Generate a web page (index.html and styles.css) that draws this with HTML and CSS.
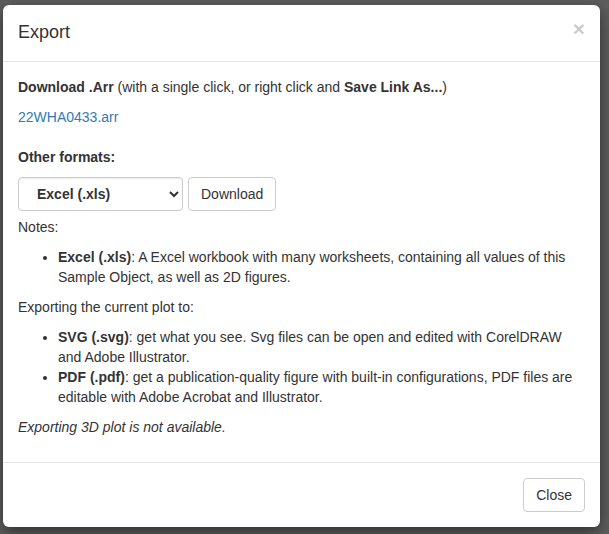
FILE: index.html
```html
<!DOCTYPE html>
<html lang="en">
<head>
<meta charset="utf-8">
<title>Export</title>
<link rel="stylesheet" href="styles.css">
</head>
<body>
<div class="modal">
  <div class="modal-header">
    <button class="close" type="button" aria-label="Close">&times;</button>
    <h4 class="modal-title">Export</h4>
  </div>
  <div class="modal-body">
    <p><strong>Download .Arr</strong> (with a single click, or right click and <strong>Save Link As...</strong>)</p>
    <p><a href="#">22WHA0433.arr</a></p>
    <p class="section-label"><strong>Other formats:</strong></p>
    <div class="format-row">
      <select class="form-control">
        <option>Excel (.xls)</option>
        <option>SVG (.svg)</option>
        <option>PDF (.pdf)</option>
      </select>
      <button class="btn" type="button">Download</button>
    </div>
    <p class="notes">Notes:</p>
    <ul>
      <li><strong>Excel (.xls)</strong>: A Excel workbook with many worksheets, containing all values of this Sample Object, as well as 2D figures.</li>
    </ul>
    <p>Exporting the current plot to:</p>
    <ul>
      <li><strong>SVG (.svg)</strong>: get what you see. Svg files can be open and edited with CorelDRAW and Adobe Illustrator.</li>
      <li><strong>PDF (.pdf)</strong>: get a publication-quality figure with built-in configurations, PDF files are editable with Adobe Acrobat and Illustrator.</li>
    </ul>
    <p><em>Exporting 3D plot is not available.</em></p>
  </div>
  <div class="modal-footer">
    <button class="btn" type="button">Close</button>
  </div>
</div>
</body>
</html>
```

FILE: styles.css
```css
html, body {
  margin: 0;
  padding: 0;
}

body {
  background: #5e5e5e;
  font-family: "Liberation Sans", Arial, Helvetica, sans-serif;
  font-size: 14px;
  line-height: 20px;
  color: #333;
  padding: 5px 9px 7px 3px;
}

.modal {
  background: #fff;
  border-radius: 6px;
  box-shadow: 0 5px 15px rgba(0, 0, 0, 0.5);
}

.modal-header {
  padding: 15px;
  border-bottom: 1px solid #e5e5e5;
}

.modal-title {
  margin: 0;
  font-size: 18px;
  font-weight: 500;
  line-height: 25.7px;
  color: #333;
}

.close {
  float: right;
  margin-top: -2px;
  padding: 0;
  border: 0;
  background: transparent;
  font-family: "Liberation Sans", Arial, sans-serif;
  font-size: 21px;
  font-weight: bold;
  line-height: 1;
  color: #000;
  opacity: 0.2;
  cursor: pointer;
}

.modal-body {
  padding: 15px;
}

p {
  margin: 0 0 10px;
}

a {
  color: #337ab7;
  text-decoration: none;
}

.section-label {
  margin-top: 20px;
}

.format-row {
  display: flex;
  gap: 5px;
  align-items: center;
}

.form-control {
  width: 165px;
  height: 34px;
  padding: 6px 12px 6px 14px;
  border: 1px solid #ccc;
  border-radius: 4px;
  background: #fff;
  box-shadow: inset 0 1px 1px rgba(0, 0, 0, 0.075);
  font-family: "Liberation Sans", Arial, sans-serif;
  font-size: 14px;
  font-weight: bold;
  color: #333;
}

.btn {
  height: 34px;
  padding: 6px 12px;
  border: 1px solid #ccc;
  border-radius: 4px;
  background: #fff;
  font-family: "Liberation Sans", Arial, sans-serif;
  font-size: 14px;
  line-height: 20px;
  color: #333;
  cursor: pointer;
}

.notes {
  margin-top: 6px;
}

ul {
  margin: 0 0 10px;
  padding-left: 40px;
}

.modal-footer {
  padding: 15px;
  border-top: 1px solid #e5e5e5;
  text-align: right;
}
```
